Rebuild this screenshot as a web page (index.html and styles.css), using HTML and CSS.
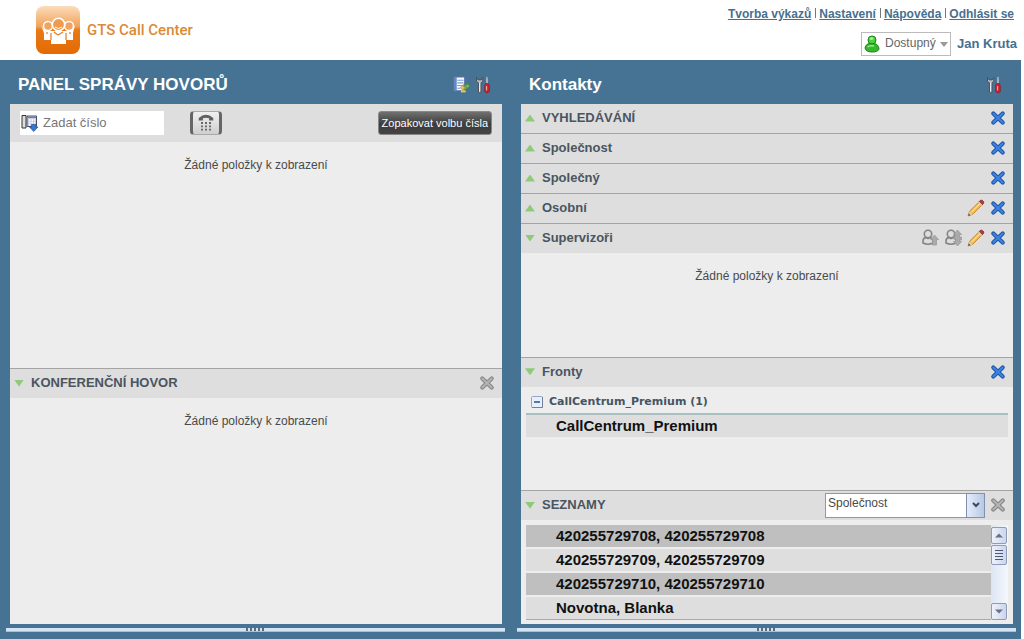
FILE: index.html
```html
<!DOCTYPE html>
<html lang="cs">
<head>
<meta charset="utf-8">
<meta name="viewport" content="width=device-width, initial-scale=1">
<title>GTS Call Center</title>
<link rel="stylesheet" href="styles.css">
</head>
<body>
<svg class="sprite" aria-hidden="true">
  <defs>
    <symbol id="cross" viewBox="0 0 16 16">
      <path d="M3.300 3.500 12.700 12.500M12.700 3.500 3.300 12.500" stroke="var(--edge)" stroke-width="4.200" stroke-linecap="round" fill="none"/>
      <path d="M3.300 3.500 12.700 12.500M12.700 3.500 3.300 12.500" stroke="var(--fill)" stroke-width="1.800" stroke-linecap="round" fill="none"/>
    </symbol>
    <symbol id="pencil" viewBox="0 0 18 18">
      <path d="M1 17 2.600 12.200 13 1.800Q14.500.600 16.200 2.200 17.200 3.600 16 5L5.600 15.400Z" fill="#f2b545" stroke="#b98434" stroke-width=".8"/>
      <path d="M4.500 13.200 13.400 4.300" stroke="#ffdc8a" stroke-width="1.300"/>
      <path d="M12.200 2.600 15.300 5.700 16.500 4.500Q17.200 3 15.900 1.900 14.700.8 13.400 1.400Z" fill="#a83c4a" stroke="#8a3040" stroke-width=".8"/>
      <path d="M11.600 3.200 14.700 6.300" stroke="#d8d5cf" stroke-width="1.200"/>
      <path d="M1 17 2.500 12.400 5.500 15.400Z" fill="#e5cfae"/>
      <path d="M1 17 1.800 14.300 3.700 16.200Z" fill="#5b5564"/>
    </symbol>
    <symbol id="tools" viewBox="0 0 16 18">
      <path d="M1.500 1.500V5L3.500 7V16.200Q4.700 17.400 5.900 16.200V7L7.800 5V1.500L6.300 3.900H3.100Z" fill="#bcc1c7" stroke="#4a4a50" stroke-width=".9"/>
      <path d="M4.700 7V15.500" stroke="#f3f3f3"/>
      <path d="M12 1V8" stroke="#cdd2d8" stroke-width="1.400"/>
      <circle cx="12" cy="2" r="1.200" fill="#8aa5b7"/>
      <path d="M10.500 7.500H13.500L14.400 10V15.500Q12 18.500 9.600 15.500V10Z" fill="#c92331" stroke="#7e2430" stroke-width=".7"/>
      <path d="M11.500 10V14.500" stroke="#f2a0a0" stroke-width="1.200"/>
    </symbol>
    <symbol id="person" viewBox="0 0 18 18">
      <circle cx="7" cy="5" r="3.700" fill="#ddd" stroke="#858585" stroke-width="1.600"/>
      <path d="M2 12Q2 8.800 5 8.600L7 9.700 9 8.600Q12 9 12 13V14Q7 16.500 2 14Z" fill="#ddd" stroke="#858585" stroke-width="1.600"/>
    </symbol>
  </defs>
</svg>

<header class="top">
  <div class="brand">
    <svg class="logo" viewBox="0 0 44 48" aria-hidden="true">
      <defs>
        <linearGradient id="orange" x2="0" y2="1">
          <stop offset="0" stop-color="#fbdcbc"/><stop offset=".42" stop-color="#f2a45c"/>
          <stop offset=".5" stop-color="#e97a16"/><stop offset="1" stop-color="#e36a04"/>
        </linearGradient>
      </defs>
      <rect width="44" height="48" rx="8" fill="url(#orange)"/>
      <path d="M5 19Q8 25 13 25H31Q36 25 39 19L37 27V34H30V38H15V34H8V27Z" fill="#fff"/>
      <circle cx="12" cy="20" r="4.500" fill="#f1a45f" stroke="#fff" stroke-width="1.500"/>
      <circle cx="33" cy="20" r="4.500" fill="#f1a45f" stroke="#fff" stroke-width="1.500"/>
      <circle cx="22.500" cy="18.500" r="6.200" fill="#ef9a4c" stroke="#fff" stroke-width="1.600"/>
      <path d="M15 27V34M30 27V34M18 26 22 29 27 26M11 26V28M34 26V28" stroke="#e9832a" stroke-width="1.300" fill="none"/>
      <path d="M19 21Q22.500 24 26 21" stroke="#fff" fill="none"/>
    </svg>
    <span class="brand-name">GTS Call Center</span>
  </div>
  <div class="account">
    <nav class="links">
      <a href="#">Tvorba výkazů</a><a href="#">Nastavení</a><a href="#">Nápověda</a><a href="#">Odhlásit se</a>
    </nav>
    <div class="user">
      <div class="status">
        <svg class="status-icon" viewBox="0 0 16 18" aria-hidden="true">
          <path d="M1 13Q2 8.500 6 8.500H10Q14.500 9 15 14 14 17 8 17T1 13Z" fill="#35b82c" stroke="#16831a"/>
          <circle cx="8" cy="5" r="4" fill="#4bd03b" stroke="#16831a"/>
          <ellipse cx="7.500" cy="3.600" rx="2" ry="1.300" fill="#a6f093"/>
          <path d="M3.500 12Q6 10 10 11" stroke="#9beb88" stroke-width="1.500" fill="none"/>
        </svg>
        <select class="status-select" aria-label="Stav"><option>Dostupný</option></select>
        <svg class="status-arrow" viewBox="0 0 8 5" aria-hidden="true"><path d="M0 0H8L4 5Z" fill="#999"/></svg>
      </div>
      <span class="user-name">Jan Kruta</span>
    </div>
  </div>
</header>

<main class="workspace">
  <section class="column">
    <div class="column-head">
      <h1>PANEL SPRÁVY HOVORŮ</h1>
      <div class="column-tools">
        <button class="icon-button" aria-label="Seznam hovorů">
          <svg class="icon" viewBox="0 0 17 17" aria-hidden="true">
            <path d="M1 1H11V14H1Z" fill="#f4f8fc" stroke="#5876a8"/>
            <path d="M1 1H3.500V14H1Z" fill="#6188c8"/>
            <path d="M4 4H10M4 6.500H10M4 9H9M4 11.500H7" stroke="#7f9fcb"/>
            <path d="M7 11 10 8V10H13V12H10V14Z" fill="#e9c75a" stroke="#9a8128" stroke-width=".6"/>
            <path d="M16 9.500 13 6.800V8.500H10.500V10.500H13V12.300Z" fill="#74b84e" stroke="#4d8130" stroke-width=".6"/>
            <path d="M7.500 14.500H12" stroke="#e9c75a" stroke-width="2"/>
          </svg>
        </button>
        <button class="icon-button" aria-label="Nástroje hovorů"><svg class="icon"><use href="#tools"/></svg></button>
      </div>
    </div>
    <div class="panel">
      <div class="toolbar">
        <label class="dial">
          <svg class="dial-icon" viewBox="0 0 18 18" aria-hidden="true">
            <path d="M1 1.500H5V14H1Z" fill="#ddd" stroke="#333"/>
            <path d="M6 2H15.500V12.500H6Z" fill="#c9d1e6" stroke="#444e68"/>
            <path d="M7 3.500H15" stroke="#717c99"/>
            <path d="M8 6H14M8 8.500H14M8 11H14" stroke="#fff" stroke-width="1.300" stroke-dasharray="1.500 1"/>
            <path d="M10.500 10.500H15V13H17L12.700 17.500 8.500 13H10.500Z" fill="#3977cf" stroke="#2356a0" stroke-width=".7"/>
          </svg>
          <input class="dial-input" type="text" placeholder="Zadat číslo" aria-label="Zadat číslo">
        </label>
        <button class="call-button" aria-label="Volat">
          <svg class="call-icon" viewBox="0 0 16 18" aria-hidden="true">
            <path d="M1.500 6.800V4.500Q8-1.500 14.500 4.500V6.800H10.800V4.800Q8 3.600 5.200 4.800V6.800Z" fill="#606060"/>
            <path d="M3.500 9H12.500M3.500 12H12.500M3.500 15H12.500" stroke="#686868" stroke-width="1.600" stroke-dasharray="1.800 1.800"/>
          </svg>
        </button>
        <button class="redial">Zopakovat volbu čísla</button>
      </div>
      <div class="content"><p class="empty">Žádné položky k zobrazení</p></div>
      <div class="bar ruled">
        <button class="toggle"><span class="arrow down"></span>KONFERENČNÍ HOVOR</button>
        <button class="icon-button" aria-label="Ukončit konferenci"><svg class="close muted"><use href="#cross"/></svg></button>
      </div>
      <div class="content"><p class="empty">Žádné položky k zobrazení</p></div>
    </div>
    <div class="splitter"><span class="grip"></span></div>
  </section>

  <section class="column">
    <div class="column-head">
      <h1>Kontakty</h1>
      <div class="column-tools">
        <button class="icon-button" aria-label="Nástroje kontaktů"><svg class="icon"><use href="#tools"/></svg></button>
      </div>
    </div>
    <div class="panel">
      <div class="bar">
        <button class="toggle"><span class="arrow"></span>VYHLEDÁVÁNÍ</button>
        <button class="icon-button" aria-label="Zavřít Vyhledávání"><svg class="close"><use href="#cross"/></svg></button>
      </div>
      <div class="bar ruled">
        <button class="toggle"><span class="arrow"></span>Společnost</button>
        <button class="icon-button" aria-label="Zavřít Společnost"><svg class="close"><use href="#cross"/></svg></button>
      </div>
      <div class="bar ruled">
        <button class="toggle"><span class="arrow"></span>Společný</button>
        <button class="icon-button" aria-label="Zavřít Společný"><svg class="close"><use href="#cross"/></svg></button>
      </div>
      <div class="bar ruled">
        <button class="toggle"><span class="arrow"></span>Osobní</button>
        <button class="icon-button" aria-label="Upravit Osobní"><svg class="icon"><use href="#pencil"/></svg></button>
        <button class="icon-button" aria-label="Zavřít Osobní"><svg class="close"><use href="#cross"/></svg></button>
      </div>
      <div class="bar ruled">
        <button class="toggle"><span class="arrow down"></span>Supervizoři</button>
        <button class="icon-button" aria-label="Přidat osobu">
          <svg class="icon" viewBox="0 0 18 18"><use href="#person" width="18" height="18"/><path d="M13.500 6 17.500 10.500H15.500V16H11.500V10.500H9.500Z" fill="#aaa" stroke="#969696" stroke-width=".7"/></svg>
        </button>
        <button class="icon-button" aria-label="Přesunout osobu">
          <svg class="icon" viewBox="0 0 18 18"><use href="#person" width="18" height="18"/><path d="M13.500 1 17.500 5.500H15.500V8H17.500V11H15.500V12.500H17.500L13.500 17 9.500 12.500H11.500V10H9.500V8H11.500V5.500H9.500Z" fill="#aaa" stroke="#969696" stroke-width=".7"/></svg>
        </button>
        <button class="icon-button" aria-label="Upravit Supervizoři"><svg class="icon"><use href="#pencil"/></svg></button>
        <button class="icon-button" aria-label="Zavřít Supervizoři"><svg class="close"><use href="#cross"/></svg></button>
      </div>
      <div class="content"><p class="empty">Žádné položky k zobrazení</p></div>
      <div class="bar ruled">
        <button class="toggle"><span class="arrow down"></span>Fronty</button>
        <button class="icon-button" aria-label="Zavřít Fronty"><svg class="close"><use href="#cross"/></svg></button>
      </div>
      <div class="content queues">
        <button class="group">
          <svg class="collapse" viewBox="0 0 12 12" aria-hidden="true"><rect x=".5" y=".5" width="11" height="11" rx="1" fill="#e9effa" stroke="#94a7c7"/><path d="M11.500 1V11.500H1" stroke="#6b7fa6" fill="none"/><path d="M3 6H9" stroke="#31589e" stroke-width="1.600"/></svg>
          CallCentrum_Premium (1)
        </button>
        <div class="entry">CallCentrum_Premium</div>
      </div>
      <div class="bar ruled">
        <button class="toggle"><span class="arrow down"></span>SEZNAMY</button>
        <div class="list-picker">
          <select class="list-select" aria-label="Seznam"><option>Společnost</option></select>
          <span class="list-drop"><svg class="chevron" viewBox="0 0 8 6" aria-hidden="true"><path d="M1 1 4 4 7 1" stroke="#3c4860" stroke-width="2" fill="none"/></svg></span>
        </div>
        <button class="icon-button" aria-label="Zavřít Seznamy"><svg class="close muted"><use href="#cross"/></svg></button>
      </div>
      <div class="content lists">
        <ul class="entries">
          <li class="entry">420255729708, 420255729708</li>
          <li class="entry">420255729709, 420255729709</li>
          <li class="entry">420255729710, 420255729710</li>
          <li class="entry">Novotna, Blanka</li>
        </ul>
        <div class="scrollbar">
          <button class="scroll-step" aria-label="Nahoru"><svg class="scroll-glyph" viewBox="0 0 8 5"><path d="M0 4.500 4 .5 8 4.500Z" fill="#66718b"/></svg></button>
          <div class="scroll-thumb"></div>
          <button class="scroll-step last" aria-label="Dolů"><svg class="scroll-glyph" viewBox="0 0 8 5"><path d="M0 .5 4 4.500 8 .5Z" fill="#66718b"/></svg></button>
        </div>
      </div>
    </div>
    <div class="splitter"><span class="grip"></span></div>
  </section>
</main>
</body>
</html>
```
FILE: styles.css
```css
* { box-sizing: border-box; }

body {
  margin: 0;
  min-height: 100vh;
  display: flex;
  flex-direction: column;
  background: #fff;
  color: #4a4a4a;
  font: 12px/16px "Liberation Sans", Arial, sans-serif;
}

button, input, select { font: inherit; color: inherit; }
button { margin: 0; padding: 0; border: 0; background: none; cursor: pointer; }
svg { display: block; }
.sprite { position: absolute; width: 0; height: 0; }

.top { display: flex; justify-content: space-between; height: 60px; padding: 6px 7px 0 36px; }
.brand { display: flex; align-items: center; gap: 7px; height: 48px; }
.logo { width: 44px; height: 48px; }
.brand-name { font: 500 15px/20px Roboto, "Liberation Sans", sans-serif; color: #dc8a35; }
.account { display: flex; flex-direction: column; align-items: flex-end; gap: 10px; }
.links { display: flex; padding-right: 3px; font-size: 12px; font-weight: bold; }
.links a { color: #47708f; }
.links a + a { margin-left: 4px; padding-left: 4px; background: linear-gradient(#777, #777) left 2px / 1px 10px no-repeat; }
.user { display: flex; align-items: center; gap: 6px; }
.user-name { color: #47708f; font-size: 13px; font-weight: bold; }
.status { display: grid; align-items: center; width: 90px; height: 24px; border: 1px solid #bbb; }
.status > * { grid-area: 1 / 1; }
.status-icon { width: 16px; height: 18px; margin-left: 2px; z-index: 1; pointer-events: none; }
.status-select { width: 100%; height: 22px; padding: 0 14px 3px 23px; border: 0; appearance: none; background: none; color: #666; }
.status-arrow { width: 8px; height: 5px; margin-right: 2px; justify-self: end; pointer-events: none; }

.workspace {
  flex: 1;
  display: grid;
  grid-template-columns: 1fr 1fr;
  gap: 12px;
  margin-right: 3px;
  padding: 0 5px 7px 6px;
  background: #467394;
}
.column { display: flex; flex-direction: column; }
.column-head { display: flex; align-items: center; justify-content: space-between; height: 44px; padding: 6px 13px 0 12px; }
.column-head h1 { margin: 0; color: #fff; font-size: 17px; line-height: 20px; }
.column-tools { display: flex; gap: 3px; }
.panel { flex: 1; display: flex; flex-direction: column; margin: 0 3px 0 4px; background: #ededed; }
.splitter { display: flex; justify-content: center; height: 4px; margin-top: 4px; background: #d3e3f3; border-bottom: 1px solid #a9c0d4; }
.grip { width: 20px; height: 3px; background: repeating-linear-gradient(90deg, #5c6b7a 0 2px, transparent 2px 4px); }

.toolbar { display: flex; align-items: center; height: 38px; padding: 0 10px; background: #dedede; }
.dial { display: flex; align-items: center; width: 144px; height: 24px; background: #fff; }
.dial-icon { flex: none; width: 18px; height: 18px; margin-left: 1px; }
.dial-input { min-width: 0; flex: 1; padding: 0 4px; border: 0; background: none; font-size: 13px; outline: 0; }
.dial-input::placeholder { color: #777; opacity: 1; }
.call-button {
  display: flex;
  align-items: center;
  justify-content: center;
  width: 32px;
  height: 24px;
  margin-left: 26px;
  border: solid #aaa;
  border-width: 1px 3px;
  border-color: #aaa #666;
  border-radius: 4px;
  background: linear-gradient(#f0f0f0, #cfcfcf);
}
.call-icon { flex: none; width: 18px; height: 20px; }
.redial {
  height: 24px;
  margin-left: auto;
  padding: 0 3px;
  border: 1px solid #888;
  border-radius: 3px;
  background: linear-gradient(#707070, #3c3c3c 55%, #444);
  color: #fff;
  font-size: 11px;
}

.bar { display: flex; align-items: center; flex: none; height: 29px; padding: 0 7px 1px 4px; background: #dedede; }
.bar.ruled { height: 30px; border-top: 1px solid #a4a4a4; }
.toggle { display: flex; align-items: center; gap: 7px; margin-right: auto; color: #4a5560; font-size: 13px; font-weight: bold; }
.arrow { width: 10px; height: 7px; background: #8fca78; clip-path: polygon(50% 0, 100% 100%, 0 100%); }
.arrow.down { clip-path: polygon(0 0, 100% 0, 50% 100%); }
.icon-button { margin-left: 5px; }
.column-tools .icon-button { margin-left: 0; }
.icon { width: 18px; height: 18px; }
.close { --edge: #2158a8; --fill: #3c86e6; width: 16px; height: 16px; }
.close.muted { --edge: #888; --fill: #b5b5b5; }

.content { flex: 1; }
.empty { margin: 15px 0; text-align: center; }
.queues { display: flow-root; padding: 0 5px; }
.group {
  display: flex;
  align-items: center;
  gap: 6px;
  width: 100%;
  height: 23px;
  margin-top: 5px;
  padding-left: 5px;
  border-bottom: 2px solid #a9bfc2;
  color: #465562;
  font: bold 11px/16px "DejaVu Sans", sans-serif;
}
.collapse { width: 12px; height: 12px; }
.entry { height: 22px; padding-left: 30px; background: #dedede; color: #111; font-size: 15px; font-weight: bold; line-height: 22px; }
.list-picker { display: grid; width: 160px; height: 25px; }
.list-picker > * { grid-area: 1 / 1; }
.list-select { width: 100%; padding: 0 20px 5px 2px; border: 1px solid #8e99a5; border-radius: 0; appearance: none; background: #fff; }
.list-drop {
  display: flex;
  align-items: center;
  justify-content: center;
  justify-self: end;
  width: 19px;
  border: 1px solid #7f91ad;
  background: linear-gradient(90deg, #e4ecfa, #b7c9e5);
  pointer-events: none;
}
.chevron { width: 8px; height: 6px; }
.lists { display: flex; align-items: flex-start; padding: 0 5px; }
.entries { flex: 1; display: grid; gap: 2px; margin: 5px 0 0; padding: 0; border-bottom: 1px solid #aaa; list-style: none; }
.entries .entry:nth-child(odd) { background: #bfbfbf; }
.scrollbar { display: flex; flex-direction: column; gap: 1px; width: 17px; height: 95px; margin-top: 5px; padding: 2px 1px 0 0; background: linear-gradient(90deg, #dde5f4, #f4f7fd); }
.scroll-step { display: flex; align-items: center; justify-content: center; height: 17px; border: 1px solid #8f9bb8; border-radius: 2px; background: linear-gradient(90deg, #eef2fb, #ccd6eb); }
.scroll-step.last { margin-top: auto; }
.scroll-glyph { width: 8px; height: 5px; }
.scroll-thumb {
  height: 20px;
  padding: 4px 3px;
  border: 1px solid #8f9bb8;
  border-radius: 2px;
  background: repeating-linear-gradient(#4c5878 0 1px, transparent 1px 3px) content-box, linear-gradient(90deg, #eef2fb, #ccd6eb);
}
```
